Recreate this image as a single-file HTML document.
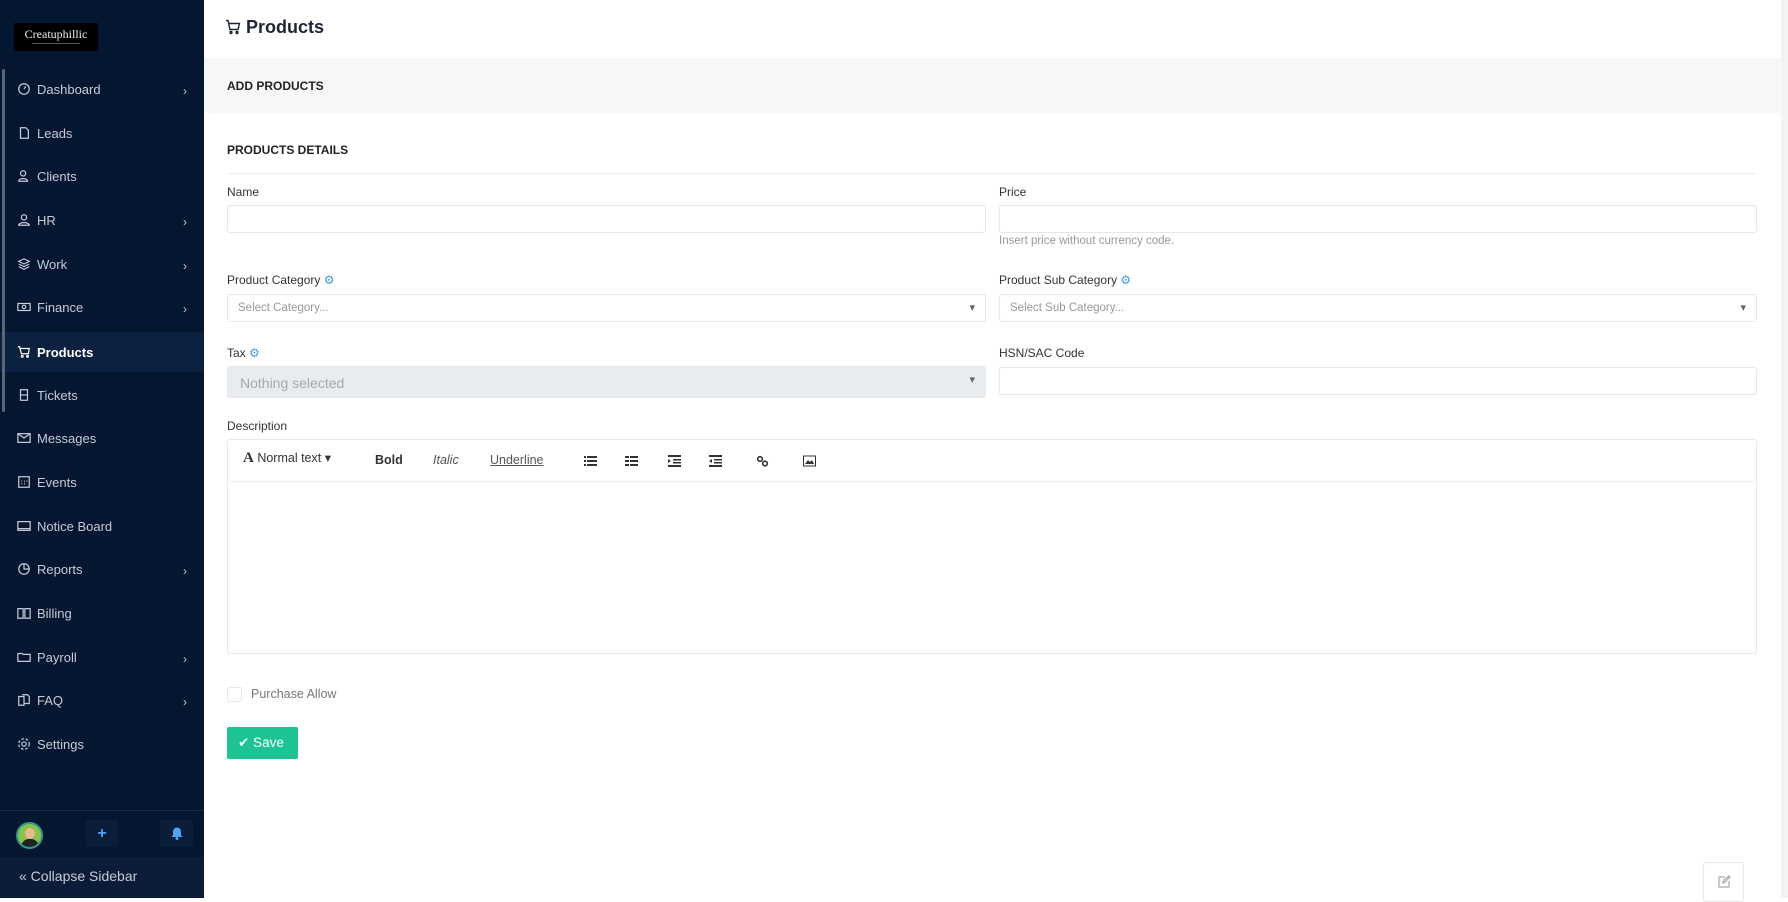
<!DOCTYPE html>
<html><head><meta charset="utf-8"><style>
*{box-sizing:border-box;margin:0;padding:0}
html,body{width:1788px;height:898px;overflow:hidden;background:#fff;font-family:"Liberation Sans",sans-serif}
#sb{position:absolute;left:0;top:0;width:204px;height:898px;background:#051631}
#sbbar{position:absolute;left:2px;top:69px;width:3px;height:343px;background:#5a6577;border-radius:2px;z-index:5}
.logo{position:absolute;left:14px;top:23px;width:84px;height:28px;background:#000;color:#eee;font-family:"Liberation Serif",serif;font-size:12px;text-align:center;line-height:22px;border-radius:2px}
.logo small{position:absolute;left:18px;top:20px;width:48px;height:1px;background:#555}
.mi{position:absolute;left:0;width:204px;height:44px;color:#c6ccd6;font-size:13px;display:flex;align-items:center;padding-left:17px}
.mi svg{width:14px;height:14px;margin-right:6px;stroke:#c6ccd6;fill:none;stroke-width:1.4}
.mi.act{background:#0b213f;color:#fff;font-weight:bold;height:40px}
.mi .ch{position:absolute;left:183px;top:17px;font-size:12px;color:#c6ccd6}
#bot{position:absolute;left:0;top:810px;width:204px;height:1px;background:#1a2a44}
.av{position:absolute;left:16px;top:822px;width:27px;height:27px;border-radius:50%;background:#8bc34a;border:2px solid #2a9d8f;overflow:hidden}
.bx{position:absolute;top:820px;width:32px;height:27px;background:#0a1d39;color:#4ea3f5;text-align:center;font-weight:bold;font-size:16px;line-height:27px}
#col{position:absolute;left:0;top:857px;width:204px;height:41px;background:#0a1c37;color:#c6ccd6;font-size:14px;padding-left:19px;line-height:39px}
#scroll{position:absolute;left:1781px;top:0;width:7px;height:898px;background:#f3f3f3}
.t{position:absolute;color:#333;font-size:12px}
.band{position:absolute;left:204px;top:58px;width:1577px;height:55px;background:#f6f7f9}
.inp{position:absolute;border:1px solid #e4e6e9;border-radius:3px;background:#fff;height:28px}
.sel{color:#999;font-size:11.5px;padding:7px 10px}
.sel::after{content:"▾";position:absolute;right:10px;top:6px;color:#666;font-size:11px}
.gear{color:#3d9ae8;font-size:12px}
.tb{position:absolute;top:453px;color:#333;font-size:12.5px}
.ic{position:absolute;top:455px;width:13px;height:12px}
</style></head><body>
<div id="sb">
<div id="sbbar"></div>
<div class="logo">Creatuphillic<small></small></div>
<div class="mi" style="top:67px"><svg viewBox="0 0 16 16"><circle cx="8" cy="8" r="6"/><path d="M8 8l2-3"/></svg>Dashboard<span class="ch">›</span></div>
<div class="mi" style="top:111px"><svg viewBox="0 0 16 16"><path d="M4 2h6l3 3v9H4z"/></svg>Leads</div>
<div class="mi" style="top:154px"><svg viewBox="0 0 16 16"><circle cx="7" cy="5" r="3"/><path d="M2 14c0-4 10-4 10 0z"/></svg>Clients</div>
<div class="mi" style="top:198px"><svg viewBox="0 0 16 16"><circle cx="8" cy="5" r="3"/><path d="M2 14c0-4 12-4 12 0z"/></svg>HR<span class="ch">›</span></div>
<div class="mi" style="top:242px"><svg viewBox="0 0 16 16"><path d="M8 2l6 3-6 3-6-3zM2 8l6 3 6-3M2 11l6 3 6-3"/></svg>Work<span class="ch">›</span></div>
<div class="mi" style="top:285px"><svg viewBox="0 0 16 16"><rect x="1" y="4" width="14" height="8"/><circle cx="8" cy="8" r="2"/></svg>Finance<span class="ch">›</span></div>
<div class="mi act" style="top:332px"><svg viewBox="0 0 16 16" style="stroke:#fff"><path d="M1 2h2l2 8h8l1-6H4"/><circle cx="6" cy="13" r="1"/><circle cx="12" cy="13" r="1"/></svg>Products</div>
<div class="mi" style="top:373px"><svg viewBox="0 0 16 16"><rect x="4" y="2" width="8" height="12"/><path d="M4 8h8"/></svg>Tickets</div>
<div class="mi" style="top:416px"><svg viewBox="0 0 16 16"><rect x="1" y="3" width="14" height="10"/><path d="M1 3l7 5 7-5"/></svg>Messages</div>
<div class="mi" style="top:460px"><svg viewBox="0 0 16 16"><rect x="2" y="2" width="12" height="12"/><path d="M5 7h1M8 7h1M11 7h1M5 10h1M8 10h1"/></svg>Events</div>
<div class="mi" style="top:504px"><svg viewBox="0 0 16 16"><rect x="1" y="3" width="14" height="10"/><path d="M1 11h14"/></svg>Notice Board</div>
<div class="mi" style="top:547px"><svg viewBox="0 0 16 16"><circle cx="8" cy="8" r="6"/><path d="M8 2v6h6"/></svg>Reports<span class="ch">›</span></div>
<div class="mi" style="top:591px"><svg viewBox="0 0 16 16"><path d="M1 3h6v11H1zM9 3h6v11H9z"/></svg>Billing</div>
<div class="mi" style="top:635px"><svg viewBox="0 0 16 16"><path d="M1 4h5l1 1h8v8H1z"/></svg>Payroll<span class="ch">›</span></div>
<div class="mi" style="top:678px"><svg viewBox="0 0 16 16"><path d="M2 4h6v10H2zM6 2h6l2 2v8h-6"/></svg>FAQ<span class="ch">›</span></div>
<div class="mi" style="top:722px"><svg viewBox="0 0 16 16"><circle cx="8" cy="8" r="2.5"/><circle cx="8" cy="8" r="6" stroke-dasharray="3 2"/></svg>Settings</div>
<div id="bot"></div>
<div class="av"><div style="position:absolute;left:7px;top:4px;width:10px;height:11px;border-radius:50%;background:#e7b98f"></div><div style="position:absolute;left:3px;top:15px;width:18px;height:12px;border-radius:8px 8px 0 0;background:#222"></div></div>
<div class="bx" style="left:86px">+</div>
<div class="bx" style="left:160px;width:33px"><svg width="12" height="13" viewBox="0 0 12 13" style="margin-top:7px" fill="#4ea3f5"><path d="M6 0.5c-2.5 0-4 2-4 4.5v3L0.5 10h11L10 8V5c0-2.5-1.5-4.5-4-4.5z"/><circle cx="6" cy="11.5" r="1.5"/></svg></div>
<div id="col">« Collapse Sidebar</div>
</div>
<div id="scroll"></div>
<svg style="position:absolute;left:225px;top:19px" width="16" height="16" viewBox="0 0 16 16" fill="none" stroke="#1e2433" stroke-width="1.4"><path d="M1 1.5h2l2 9h8l1.5-6H4"/><circle cx="6" cy="13.5" r="1"/><circle cx="12" cy="13.5" r="1"/></svg>
<div class="t" style="left:246px;top:17px;font-size:18px;font-weight:bold;color:#1e2433">Products</div>
<div class="band"></div>
<div class="t" style="left:227px;top:79px;font-weight:bold;font-size:12px;color:#222">ADD PRODUCTS</div>
<div class="t" style="left:227px;top:143px;font-weight:bold;font-size:12px;color:#222">PRODUCTS DETAILS</div>
<div style="position:absolute;left:227px;top:173px;width:1530px;height:1px;background:#eceef1"></div>
<div class="t" style="left:227px;top:185px">Name</div>
<div class="inp" style="left:227px;top:205px;width:759px"></div>
<div class="t" style="left:999px;top:185px">Price</div>
<div class="inp" style="left:999px;top:205px;width:758px"></div>
<div class="t" style="left:999px;top:235px;color:#999;font-size:11.5px">Insert price without currency code.</div>
<div class="t" style="left:227px;top:273px">Product Category <span class="gear">⚙</span></div>
<div class="inp sel" style="left:227px;top:294px;width:759px">Select Category...</div>
<div class="t" style="left:999px;top:273px">Product Sub Category <span class="gear">⚙</span></div>
<div class="inp sel" style="left:999px;top:294px;width:758px">Select Sub Category...</div>
<div class="t" style="left:227px;top:346px">Tax <span class="gear">⚙</span></div>
<div class="inp sel" style="left:227px;top:366px;width:759px;height:32px;background:#e9ecef;border-color:#e4e6e9;font-size:14px;color:#a5a8ad;padding:8px 12px">Nothing selected</div>
<div class="t" style="left:999px;top:346px">HSN/SAC Code</div>
<div class="inp" style="left:999px;top:367px;width:758px"></div>
<div class="t" style="left:227px;top:419px">Description</div>
<div style="position:absolute;left:227px;top:439px;width:1530px;height:215px;border:1px solid #e6e8eb;border-radius:3px"></div>
<div style="position:absolute;left:228px;top:481px;width:1528px;height:1px;background:#eceef1"></div>
<div class="tb" style="left:243px;top:450px"><span style="font-family:'Liberation Serif',serif;font-weight:bold;font-size:15px">A</span> Normal text ▾</div>
<div class="tb" style="left:375px;font-weight:bold">Bold</div>
<div class="tb" style="left:433px;font-style:italic;color:#555">Italic</div>
<div class="tb" style="left:490px;text-decoration:underline;color:#555">Underline</div>
<svg class="ic" style="left:584px" viewBox="0 0 13 12" fill="#333"><rect x="0" y="1" width="2" height="2"/><rect x="3" y="1" width="10" height="2"/><rect x="0" y="5" width="2" height="2"/><rect x="3" y="5" width="10" height="2"/><rect x="0" y="9" width="2" height="2"/><rect x="3" y="9" width="10" height="2"/></svg>
<svg class="ic" style="left:625px" viewBox="0 0 13 12" fill="#333"><rect x="0" y="1" width="4" height="2"/><rect x="5" y="1" width="8" height="2"/><rect x="0" y="5" width="4" height="2"/><rect x="5" y="5" width="8" height="2"/><rect x="0" y="9" width="4" height="2"/><rect x="5" y="9" width="8" height="2"/></svg>
<svg class="ic" style="left:668px" viewBox="0 0 13 12" fill="#333"><rect x="0" y="0" width="13" height="2"/><rect x="5" y="4" width="8" height="1.5"/><rect x="5" y="7" width="8" height="1.5"/><rect x="0" y="10" width="13" height="2"/><path d="M0 4l3 2-3 2z"/></svg>
<svg class="ic" style="left:709px" viewBox="0 0 13 12" fill="#333"><rect x="0" y="0" width="13" height="2"/><rect x="5" y="4" width="8" height="1.5"/><rect x="5" y="7" width="8" height="1.5"/><rect x="0" y="10" width="13" height="2"/><path d="M3 4l-3 2 3 2z"/></svg>
<svg class="ic" style="left:756px" viewBox="0 0 13 12" fill="none" stroke="#333" stroke-width="1.6"><circle cx="4" cy="4" r="2.3"/><circle cx="9" cy="8.5" r="2.3"/></svg>
<svg class="ic" style="left:803px" viewBox="0 0 13 12"><rect x="0.5" y="1" width="12" height="10" fill="none" stroke="#333"/><path d="M2 9l3-4 2 2 2-2 2 4z" fill="#333"/></svg>
<div style="position:absolute;left:227px;top:687px;width:15px;height:15px;border:1px solid #e8e8e8;border-radius:2px"></div>
<div class="t" style="left:251px;top:687px;color:#777;font-size:12.5px">Purchase Allow</div>
<div style="position:absolute;left:227px;top:727px;width:71px;height:32px;background:#1cc494;border-radius:2px;color:#fff;font-size:13.5px;line-height:32px;padding-left:11px">✔ Save</div>
<div style="position:absolute;left:1703px;top:862px;width:41px;height:40px;border:1px solid #e6e6e6;border-radius:3px;background:#fff"><svg style="position:absolute;left:14px;top:12px" width="13" height="13" viewBox="0 0 13 13" fill="none" stroke="#aaa" stroke-width="1.3"><path d="M7 2H1v10h10V6"/><path d="M5 8l1-3 5-4 1 1-5 5z"/></svg></div>
</body></html>
